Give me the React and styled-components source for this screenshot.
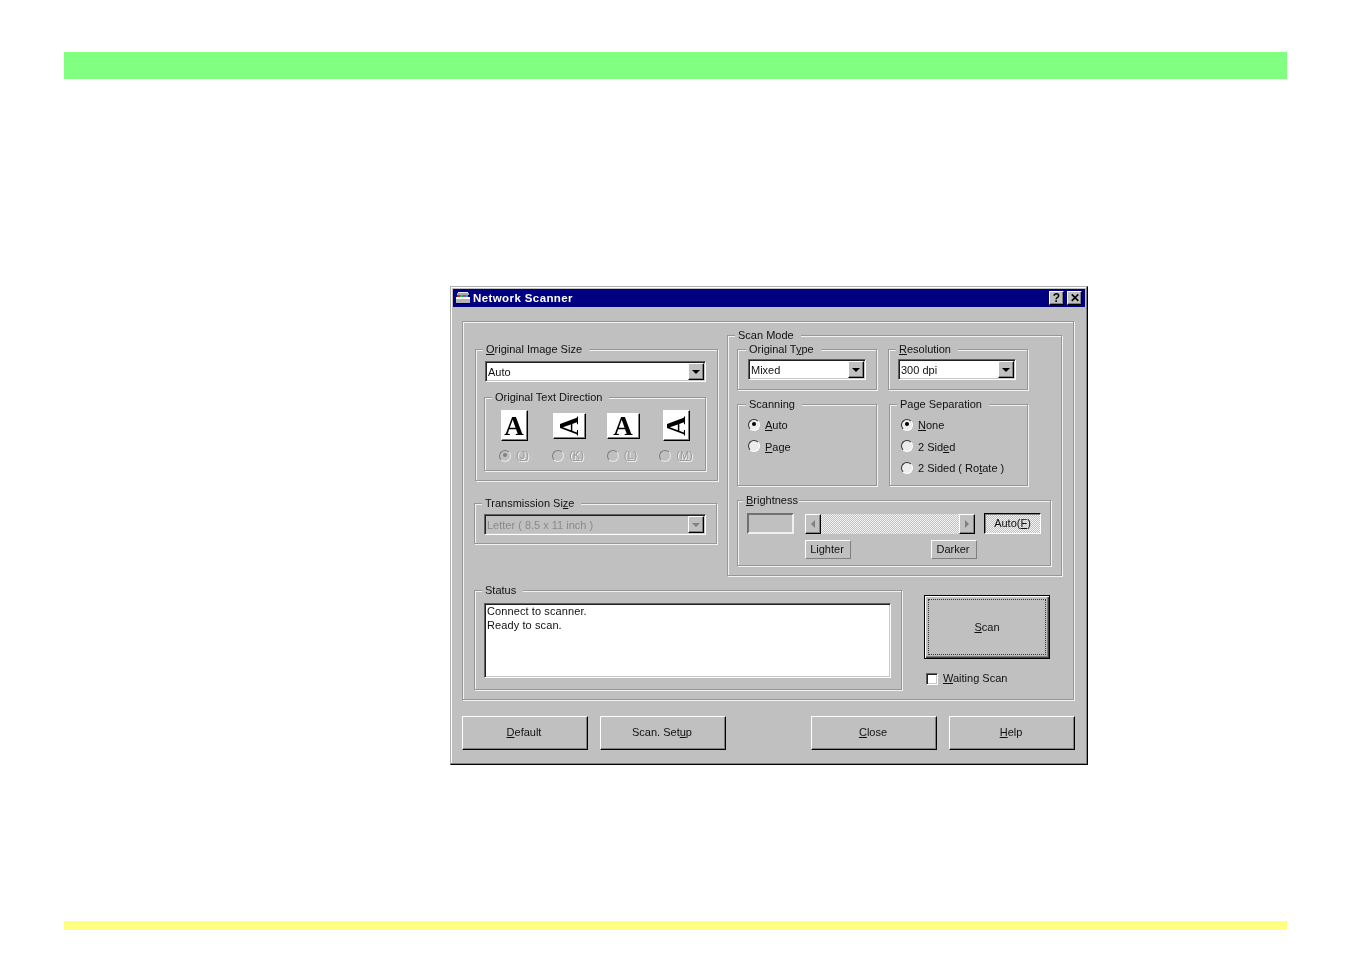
import React from "react";
import styled, { createGlobalStyle, css } from "styled-components";

const Global = createGlobalStyle`
  html, body { margin: 0; padding: 0; background: #fff; }
  body { font-family: "Liberation Sans", Arial, sans-serif; }
  u { text-underline-offset: 1px; text-decoration-thickness: 1px; }
`;

const raised = css`
  background-color: #c0c0c0;
  border: 1px solid;
  border-color: #fff #000 #000 #fff;
  box-shadow: inset -1px -1px 0 #808080;
`;
const sunken = css`
  border: 1px solid;
  border-color: #606060 #fff #fff #606060;
  box-shadow: inset 1px 1px 0 #202020, inset -1px -1px 0 #c8c8c8;
`;
const etched = css`
  border: 1px solid #979797;
  box-shadow: 1px 1px 0 #f2f2f2, inset 1px 1px 0 #f2f2f2;
`;
const dither = css`
  background-color: #e4e4e4;
  background-image: repeating-conic-gradient(#f4f4f4 0 25%, #c0c0c0 0 50%);
  background-size: 2px 2px;
`;

const Page = styled.div`
  width: 1352px;
  height: 954px;
  padding-top: 52px;
  box-sizing: border-box;
  overflow: hidden;
  display: flex;
  flex-direction: column;
  align-items: flex-start;
`;
const GreenBar = styled.div`
  width: 1223px;
  height: 27px;
  margin-left: 64px;
  background: #80ff80;
`;
const YellowBar = styled.div`
  width: 1223px;
  height: 9px;
  margin: 156px 0 0 64px;
  background: #ffff80;
`;
const Window = styled.div`
  width: 638px;
  height: 479px;
  margin: 207px 0 0 450px;
  box-sizing: border-box;
  padding: 2px;
  background: #c0c0c0;
  border: 1px solid;
  border-color: #b0b0b0 #000 #000 #b0b0b0;
  box-shadow: inset -1px -1px 0 #808080, inset 1px 1px 0 #fff;
  font-size: 11px;
  line-height: 13px;
  color: #111;
  filter: blur(0.4px);
`;
const TitleBar = styled.div`
  height: 18px;
  background: #000080;
  display: flex;
  align-items: center;
  padding: 0 3px 0 2px;
  color: #fff;
  font-weight: 700;
  font-size: 11.5px;
`;
const TitleText = styled.span`
  margin-left: 2px;
  flex: 1;
  letter-spacing: 0.4px;
`;
const TitleButton = styled.div`
  ${raised}
  width: 15px;
  height: 14px;
  box-sizing: border-box;
  margin-left: ${(p) => p.$gap || 0}px;
  color: #000;
  font-size: 12px;
  font-weight: 700;
  line-height: 12px;
  text-align: center;
`;
const Body = styled.div`
  padding: 14px 0 0 9px;
  width: 613px;
`;
const Panel = styled.div`
  ${etched}
  width: 612px;
  height: 379px;
  box-sizing: border-box;
  padding: 7px 0 0 11px;
`;
const Row = styled.div`
  display: flex;
  gap: ${(p) => p.$gap || 0}px;
  margin-top: ${(p) => p.$top || 0}px;
  margin-left: ${(p) => p.$left || 0}px;
  align-items: ${(p) => p.$align || "flex-start"};
`;
const LeftColumn = styled.div`
  width: 244px;
  padding-top: 14px;
  display: flex;
  flex-direction: column;
  gap: 16px;
`;
const Group = styled.fieldset`
  ${etched}
  box-sizing: border-box;
  min-width: 0;
  margin: ${(p) => p.$mt || 0}px 0 0 ${(p) => p.$ml || 0}px;
  width: ${(p) => p.$w}px;
  height: ${(p) => p.$h}px;
  padding: ${(p) => p.$pt ?? 4}px 0 0 ${(p) => p.$pl ?? 9}px;
`;
const Legend = styled.legend`
  margin-left: ${(p) => p.$ml ?? -2}px;
  padding: 0 ${(p) => p.$pr ?? 7}px 0 3px;
  height: 13px;
  line-height: 13px;
  background: #c0c0c0;
  white-space: nowrap;
`;
const Combo = styled.div`
  ${sunken}
  width: ${(p) => p.$w}px;
  height: 21px;
  box-sizing: border-box;
  background: ${(p) => (p.$disabled ? "#c0c0c0" : "#fff")};
  color: ${(p) => (p.$disabled ? "#8a8a8a" : "#111")};
  display: flex;
  align-items: center;
  padding: 1px 1px 1px 2px;
`;
const ComboText = styled.span`
  flex: 1;
  white-space: nowrap;
  padding-top: 1px;
`;
const ComboButton = styled.div`
  ${raised}
  width: 16px;
  height: 17px;
  box-sizing: border-box;
  display: flex;
  align-items: center;
  justify-content: center;
`;
const DownArrow = styled.span`
  width: 0;
  height: 0;
  border-left: 4px solid transparent;
  border-right: 4px solid transparent;
  border-top: 4px solid ${(p) => (p.$disabled ? "#808080" : "#000")};
`;
const DirectionRow = styled.div`
  display: flex;
  justify-content: center;
  padding-top: 6px;
`;
const DirectionCell = styled.div`
  width: 54px;
  display: flex;
  flex-direction: column;
  align-items: center;
`;
const IconSlot = styled.div`
  height: 31px;
  display: flex;
  align-items: center;
  justify-content: center;
`;
const PaperIcon = styled.div`
  ${raised}
  width: ${(p) => p.$w}px;
  height: ${(p) => p.$h}px;
  margin-left: ${(p) => p.$nudge || 0}px;
  box-sizing: border-box;
  background: #fff;
  display: flex;
  align-items: center;
  justify-content: center;
`;
const PaperLetter = styled.span`
  font-family: "Liberation Serif", "Times New Roman", serif;
  font-weight: 700;
  font-size: 27px;
  line-height: 26px;
  color: #000;
  transform: ${(p) => (p.$turned ? "rotate(-90deg)" : "none")};
`;
const DirectionChoice = styled.div`
  display: flex;
  align-items: center;
  gap: 5px;
  margin-top: 8px;
  color: #9a9a9a;
  text-shadow: 1px 1px 0 #f0f0f0;
`;
const Radio = styled.span`
  flex: none;
  position: relative;
  width: 12px;
  height: 12px;
  box-sizing: border-box;
  border-radius: 50%;
  border: 1.5px solid;
  border-color: ${(p) =>
    p.$disabled ? "#7c7c7c #e8e8e8 #e8e8e8 #7c7c7c" : "#303030 #fff #fff #303030"};
  background: ${(p) => (p.$disabled ? "#c0c0c0" : "#ececec")};
  &::after {
    content: "";
    display: ${(p) => (p.$on ? "block" : "none")};
    position: absolute;
    left: 2.5px;
    top: 2.5px;
    width: 4px;
    height: 4px;
    border-radius: 50%;
    background: ${(p) => (p.$disabled ? "#808080" : "#000")};
  }
`;
const RadioList = styled.div`
  display: flex;
  flex-direction: column;
  gap: 8.5px;
`;
const RadioRow = styled.div`
  display: flex;
  align-items: center;
  gap: 5px;
  height: 13px;
  white-space: nowrap;
`;
const RadioLabel = styled.span`
  padding-top: 2px;
`;
const ValueBox = styled.div`
  border: 2px solid;
  border-color: #707070 #f0f0f0 #f0f0f0 #707070;
  width: 47px;
  height: 21px;
  box-sizing: border-box;
`;
const ScrollBar = styled.div`
  ${dither}
  width: 170px;
  height: 20px;
  display: flex;
  justify-content: space-between;
`;
const ScrollButton = styled.div`
  ${raised}
  width: 16px;
  height: 20px;
  box-sizing: border-box;
  display: flex;
  align-items: center;
  justify-content: center;
`;
const SideArrow = styled.span`
  width: 0;
  height: 0;
  border-top: 4px solid transparent;
  border-bottom: 4px solid transparent;
  ${(p) => (p.$left ? "border-right" : "border-left")}: 4px solid #808080;
`;
const ToggleButton = styled.div`
  ${dither}
  width: 57px;
  height: 21px;
  box-sizing: border-box;
  border: 1px solid;
  border-color: #000 #fff #fff #000;
  box-shadow: inset 1px 1px 0 #808080;
  display: flex;
  align-items: center;
  justify-content: center;
`;
const FlatLabel = styled.div`
  width: ${(p) => p.$w}px;
  height: 19px;
  box-sizing: border-box;
  border: 1px solid;
  border-color: #fff #808080 #808080 #fff;
  display: flex;
  align-items: center;
  justify-content: center;
  padding-right: 2px;
`;
const StatusBox = styled.div`
  ${sunken}
  width: 407px;
  height: 75px;
  box-sizing: border-box;
  background: #fff;
  padding: 0 2px;
  font-size: 11px;
  line-height: 14px;
  letter-spacing: 0.1px;
`;
const ScanColumn = styled.div`
  margin: 11px 0 0 22px;
`;
const DefaultButton = styled.div`
  width: 126px;
  height: 64px;
  box-sizing: border-box;
  border: 1px solid #000;
  box-shadow: inset 1px 1px 0 #fff, inset -1px -1px 0 #404040, inset -2px -2px 0 #808080;
  display: flex;
  padding: 3px;
`;
const FocusRing = styled.div`
  flex: 1;
  border: 1px dotted #333;
  display: flex;
  align-items: center;
  justify-content: center;
`;
const CheckRow = styled.div`
  display: flex;
  align-items: center;
  gap: 5px;
  margin: 13px 0 0 2px;
`;
const CheckBox = styled.span`
  ${sunken}
  width: 12px;
  height: 12px;
  box-sizing: border-box;
  background: #fff;
`;
const Footer = styled.div`
  display: flex;
  gap: 12px;
  margin-top: 16px;
`;
const Spacer = styled.div`
  width: 61px;
`;
const PushButton = styled.div`
  ${raised}
  flex: none;
  width: 126px;
  height: 34px;
  box-sizing: border-box;
  padding: 0 2px 2px 0;
  display: flex;
  align-items: center;
  justify-content: center;
`;

const ScannerIcon = () => (
  <svg width="16" height="15" viewBox="0 0 16 15">
    <rect x="3" y="1" width="10" height="1" fill="#e8e8e8" />
    <rect x="2" y="2" width="12" height="2" fill="#a8a8a8" />
    <rect x="2" y="4" width="3" height="2" fill="#e02020" />
    <rect x="5" y="4" width="3" height="2" fill="#20c040" />
    <rect x="8" y="4" width="3" height="2" fill="#d020d0" />
    <rect x="11" y="4" width="2" height="2" fill="#20a0e0" />
    <rect x="1" y="6" width="14" height="2" fill="#fff" />
    <rect x="1" y="8" width="14" height="4" fill="#b4b4b4" />
    <rect x="1" y="12" width="14" height="1" fill="#000" />
  </svg>
);

const directions = [
  { w: 27, h: 31, turned: false, key: "J", on: true },
  { w: 33, h: 26, turned: true, key: "K", nudge: 2 },
  { w: 33, h: 26, turned: false, key: "L", nudge: 2 },
  { w: 27, h: 31, turned: true, key: "M" },
];

const Select = ({ w, text, disabled }) => (
  <Combo $w={w} $disabled={disabled}>
    <ComboText>{text}</ComboText>
    <ComboButton>
      <DownArrow $disabled={disabled} />
    </ComboButton>
  </Combo>
);

export default function App() {
  return (
    <Page>
      <Global />
      <GreenBar />
      <Window>
        <TitleBar>
          <ScannerIcon />
          <TitleText>Network Scanner</TitleText>
          <TitleButton>?</TitleButton>
          <TitleButton $gap={3}>✕</TitleButton>
        </TitleBar>
        <Body>
          <Panel>
            <Row $gap={9}>
              <LeftColumn>
                <Group $ml={1} $w={243} $h={138} $pt={5}>
                  <Legend><u>O</u>riginal Image Size</Legend>
                  <Select w={221} text="Auto" />
                  <Group $ml={-1} $mt={9} $w={222} $h={80} $pt={0} $pl={0}>
                    <Legend $ml={7}>Original Text Direction</Legend>
                    <DirectionRow>
                      {directions.map((d) => (
                        <DirectionCell key={d.key}>
                          <IconSlot>
                            <PaperIcon $w={d.w} $h={d.h} $nudge={d.nudge}>
                              <PaperLetter $turned={d.turned}>A</PaperLetter>
                            </PaperIcon>
                          </IconSlot>
                          <DirectionChoice>
                            <Radio $disabled $on={d.on} />
                            <span>(<u>{d.key}</u>)</span>
                          </DirectionChoice>
                        </DirectionCell>
                      ))}
                    </DirectionRow>
                  </Group>
                </Group>
                <Group $w={243} $h={47}>
                  <Legend>Transmission Si<u>z</u>e</Legend>
                  <Select w={222} text="Letter ( 8.5 x 11 inch )" disabled />
                </Group>
              </LeftColumn>
              <Group $w={335} $h={247} $pt={1}>
                <Legend>Scan Mode</Legend>
                <Row $gap={11}>
                  <Group $w={140} $h={47} $pt={3} $pl={10}>
                    <Legend $ml={-2}>Original T<u>y</u>pe</Legend>
                    <Select w={118} text="Mixed" />
                  </Group>
                  <Group $w={140} $h={47} $pt={3}>
                    <Legend><u>R</u>esolution</Legend>
                    <Select w={118} text="300 dpi" />
                  </Group>
                </Row>
                <Row $gap={12} $top={8}>
                  <Group $w={140} $h={88} $pt={7} $pl={10}>
                    <Legend>Scanning</Legend>
                    <RadioList>
                      <RadioRow><Radio $on /><RadioLabel><u>A</u>uto</RadioLabel></RadioRow>
                      <RadioRow><Radio /><RadioLabel><u>P</u>age</RadioLabel></RadioRow>
                    </RadioList>
                  </Group>
                  <Group $w={139} $h={88} $pt={7} $pl={11}>
                    <Legend $ml={-4}>Page Separation</Legend>
                    <RadioList>
                      <RadioRow><Radio $on /><RadioLabel><u>N</u>one</RadioLabel></RadioRow>
                      <RadioRow><Radio /><RadioLabel>2 Sid<u>e</u>d</RadioLabel></RadioRow>
                      <RadioRow><Radio /><RadioLabel>2 Sided ( Ro<u>t</u>ate )</RadioLabel></RadioRow>
                    </RadioList>
                  </Group>
                </Row>
                <Group $mt={8} $w={314} $h={72} $pt={6}>
                  <Legend $ml={-4} $pr={1}><u>B</u>rightness</Legend>
                  <Row $align="center">
                    <ValueBox />
                    <Row $left={11}>
                      <ScrollBar>
                        <ScrollButton><SideArrow $left /></ScrollButton>
                        <ScrollButton><SideArrow /></ScrollButton>
                      </ScrollBar>
                    </Row>
                    <Row $left={9}>
                      <ToggleButton><span>Auto(<u>F</u>)</span></ToggleButton>
                    </Row>
                  </Row>
                  <Row $top={6} $left={58} $gap={80}>
                    <FlatLabel $w={46}>Lighter</FlatLabel>
                    <FlatLabel $w={46}>Darker</FlatLabel>
                  </Row>
                </Group>
              </Group>
            </Row>
            <Row $top={8}>
              <Group $w={428} $h={106} $pt={6}>
                <Legend>Status</Legend>
                <StatusBox>
                  Connect to scanner.
                  <br />
                  Ready to scan.
                </StatusBox>
              </Group>
              <ScanColumn>
                <DefaultButton>
                  <FocusRing><span><u>S</u>can</span></FocusRing>
                </DefaultButton>
                <CheckRow>
                  <CheckBox />
                  <span><u>W</u>aiting Scan</span>
                </CheckRow>
              </ScanColumn>
            </Row>
          </Panel>
          <Footer>
            <PushButton><span><u>D</u>efault</span></PushButton>
            <PushButton><span>Scan. Set<u>u</u>p</span></PushButton>
            <Spacer />
            <PushButton><span><u>C</u>lose</span></PushButton>
            <PushButton><span><u>H</u>elp</span></PushButton>
          </Footer>
        </Body>
      </Window>
      <YellowBar />
    </Page>
  );
}
